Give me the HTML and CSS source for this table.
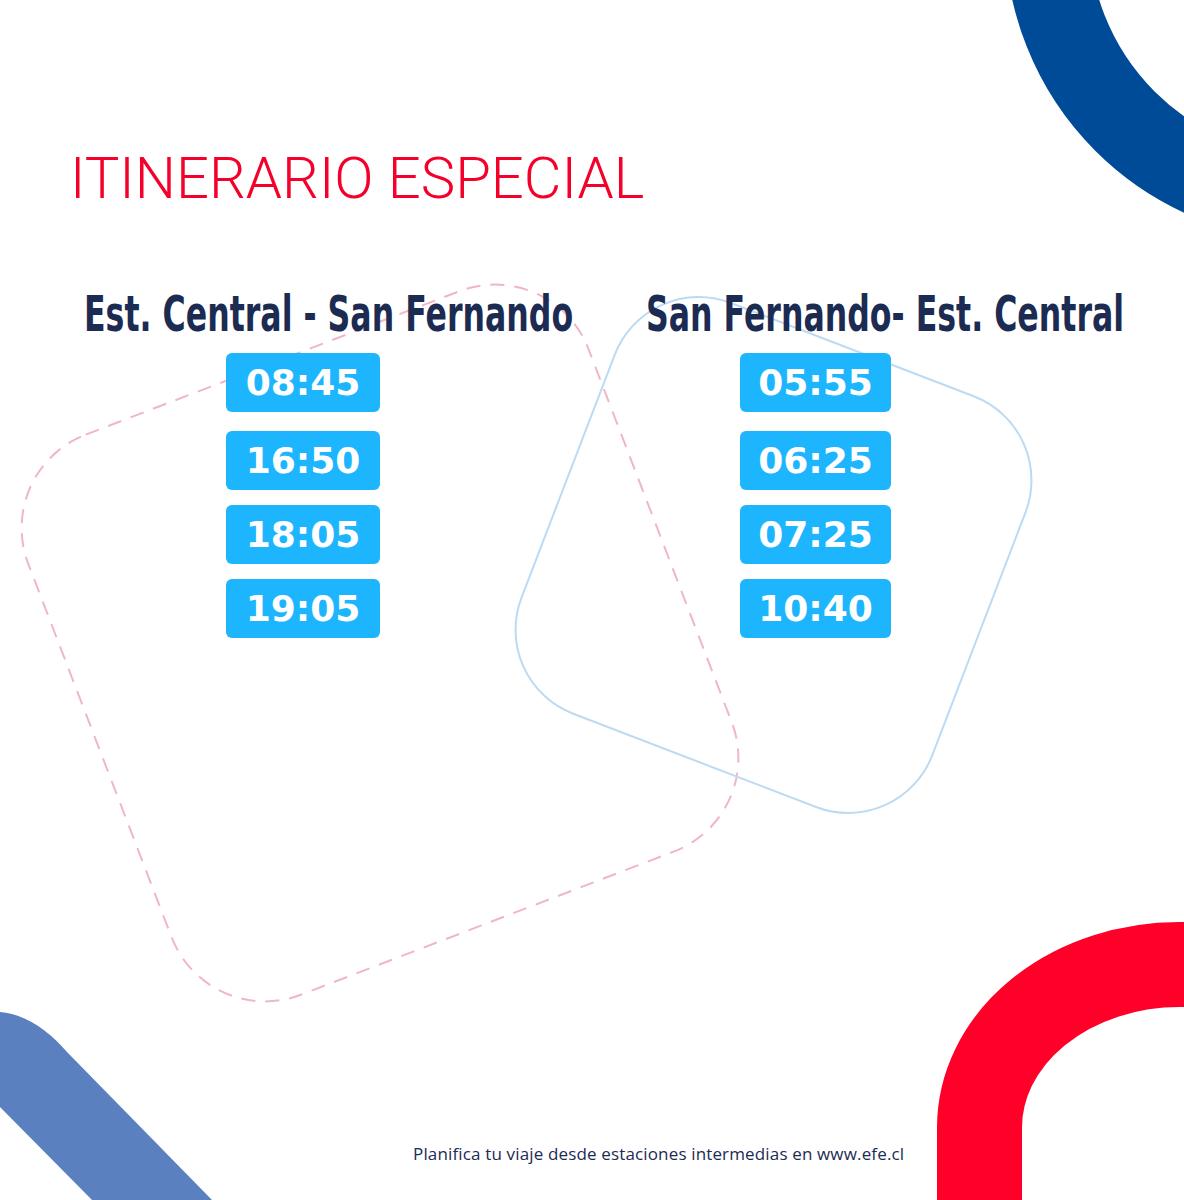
FILE: index.html
```html
<!DOCTYPE html>
<html lang="es">
<head>
<meta charset="utf-8">
<title>Itinerario especial</title>
<link rel="stylesheet" href="styles.css">
</head>
<body>
<main class="poster">
  <svg class="decor" width="1184" height="1200" viewBox="0 0 1184 1200" aria-hidden="true">
    <circle cx="1313" cy="-67" r="266" fill="none" stroke="#004b98" stroke-width="84"/>
    <rect x="979.5" y="964.5" width="600" height="600" rx="200" ry="163" fill="none" stroke="#ff0029" stroke-width="85"/>
    <path d="M0 1012 C25 1014 48 1030 67 1052 L212 1200 L92 1200 L0 1107 Z" fill="#5b80bf"/>
    <rect x="80" y="343" width="600" height="600" rx="100" fill="none" stroke="#f0b6c8" stroke-width="2" stroke-dasharray="14 10" transform="rotate(-21 380 643)"/>
    <rect x="553.5" y="335" width="440" height="440" rx="90" fill="none" stroke="#bcdaf2" stroke-width="2" transform="rotate(21 773.5 555)"/>
  </svg>

  <h1 class="title">ITINERARIO ESPECIAL</h1>

  <section class="routes">
    <div class="route route-out">
      <h2 class="route-name">Est. Central - San Fernando</h2>
      <ul class="times">
        <li class="time">08:45</li>
        <li class="time">16:50</li>
        <li class="time">18:05</li>
        <li class="time">19:05</li>
      </ul>
    </div>
    <div class="route route-back">
      <h2 class="route-name">San Fernando- Est. Central</h2>
      <ul class="times">
        <li class="time">05:55</li>
        <li class="time">06:25</li>
        <li class="time">07:25</li>
        <li class="time">10:40</li>
      </ul>
    </div>
  </section>

  <p class="note">Planifica tu viaje desde estaciones intermedias en www.efe.cl</p>
</main>
</body>
</html>
```
FILE: styles.css
```css
* { box-sizing: border-box; }
html, body { margin: 0; padding: 0; background: #ffffff; }

.poster {
  position: relative;
  width: 1184px;
  height: 1200px;
  overflow: hidden;
  background: #ffffff;
  display: flex;
  flex-direction: column;
}

.decor {
  position: absolute;
  left: 0;
  top: 0;
  z-index: 0;
}

.title {
  position: relative;
  z-index: 1;
  margin: 146px 0 0 70px;
  font-family: Roboto, "Liberation Sans", sans-serif;
  font-weight: 300;
  font-size: 58px;
  line-height: 64px;
  color: #f4002a;
}

.routes {
  position: relative;
  z-index: 1;
  display: flex;
  margin-top: 76px;
}

.route { display: flex; flex-direction: column; }
.route-out { margin-left: 84px; width: 562px; }
.route-back { width: 538px; }

.route-name {
  margin: 0;
  height: 56px;
  font-family: "DejaVu Sans", sans-serif;
  font-weight: 700;
  font-size: 50px;
  line-height: 56px;
  color: #1c2b52;
  white-space: nowrap;
  transform: scaleX(0.632);
  transform-origin: 0 50%;
}

.times {
  list-style: none;
  margin: 11px 0 0;
  padding: 0;
  display: flex;
  flex-direction: column;
  gap: 15px;
}
.route-out .times { padding-left: 142px; }
.route-back .times { padding-left: 94px; }

.time {
  width: 154px;
  height: 59px;
  border-radius: 6px;
  background: #1cb5fe;
  color: #ffffff;
  font-family: "DejaVu Sans", sans-serif;
  font-weight: 700;
  font-size: 36px;
  display: flex;
  align-items: center;
  justify-content: center;
}
.route-back .time { width: 151px; }
.times .time:first-child { margin-bottom: 4px; }

.note {
  position: relative;
  z-index: 1;
  margin: auto 0 35px 413px;
  font-family: "Open Sans", sans-serif;
  font-size: 17px;
  letter-spacing: 0.15px;
  line-height: 22px;
  color: #1c2b52;
}
```
